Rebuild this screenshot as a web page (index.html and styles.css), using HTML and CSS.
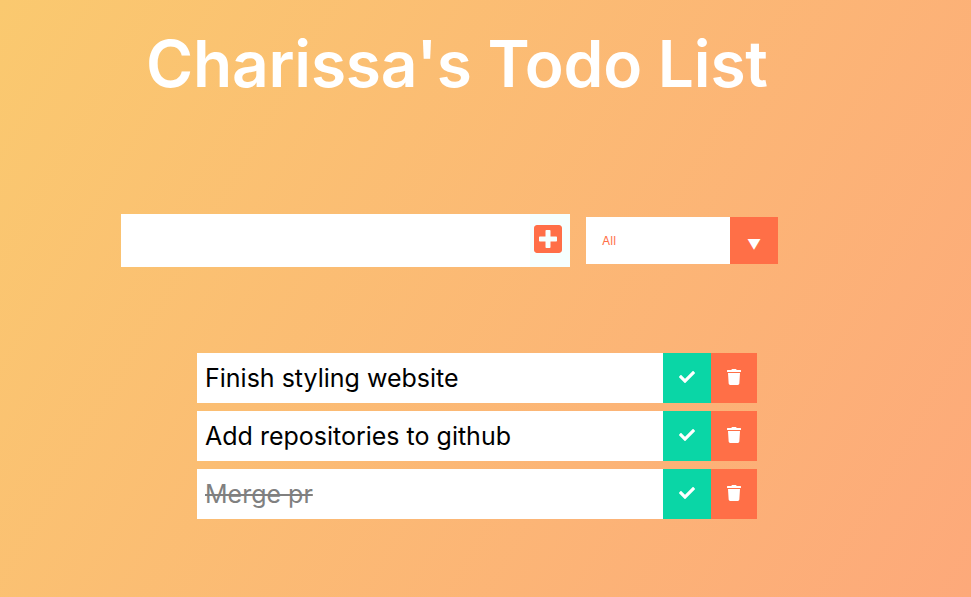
FILE: index.html
```html
<!DOCTYPE html>
<html>
    <head>
        <link rel="stylesheet" href="styles.css">
    </head>
    <body>
        <header class="title-bar">
            <h1>Charissa's Todo List</h1>
        </header>
        <form class="todo-form">
            <div class="todo-input-box">
                <input type="text" class="todo-input">
                <button type="button" class="add-btn">
                    <svg width="28" height="32" viewBox="0 0 448 512"><path fill="#ff6f47" d="M400 32H48C21.500 32 0 53.500 0 80v352c0 26.500 21.500 48 48 48h352c26.500 0 48-21.500 48-48V80c0-26.500-21.500-48-48-48zm-32 252c0 6.600-5.400 12-12 12h-92v92c0 6.600-5.400 12-12 12h-56c-6.600 0-12-5.400-12-12v-92H92c-6.600 0-12-5.400-12-12v-56c0-6.600 5.400-12 12-12h92v-92c0-6.600 5.400-12 12-12h56c6.600 0 12 5.400 12 12v92h92c6.600 0 12 5.400 12 12v56z"/></svg>
                </button>
            </div>
            <div class="filter">
                <span class="filter-value">All</span>
                <span class="filter-arrow">&#9660;</span>
            </div>
        </form>
        <ul class="todo-list">
            <li class="todo">
                <span class="todo-text">Finish styling website</span>
                <button class="check-btn">
                    <svg width="16" height="16" viewBox="0 0 512 512"><path fill="#fff" d="M173.900 439.400l-166.400-166.400c-10-10-10-26.200 0-36.200l36.200-36.200c10-10 26.200-10 36.200 0L192 312.700 432.100 72.600c10-10 26.200-10 36.200 0l36.200 36.200c10 10 10 26.200 0 36.200l-294.400 294.400c-10 10-26.200 10-36.200 0z"/></svg>
                </button>
                <button class="trash-btn">
                    <svg width="14" height="16" viewBox="0 0 448 512"><path fill="#fff" d="M432 32H312l-9.400-18.700A24 24 0 0 0 281.100 0H166.800a23.720 23.720 0 0 0-21.400 13.300L136 32H16A16 16 0 0 0 0 48v32a16 16 0 0 0 16 16h416a16 16 0 0 0 16-16V48a16 16 0 0 0-16-16zM53.200 467a48 48 0 0 0 47.900 45h245.800a48 48 0 0 0 47.900-45L416 128H32z"/></svg>
                </button>
            </li>
            <li class="todo">
                <span class="todo-text">Add repositories to github</span>
                <button class="check-btn">
                    <svg width="16" height="16" viewBox="0 0 512 512"><path fill="#fff" d="M173.900 439.400l-166.400-166.400c-10-10-10-26.200 0-36.200l36.200-36.200c10-10 26.200-10 36.200 0L192 312.700 432.100 72.600c10-10 26.200-10 36.200 0l36.200 36.200c10 10 10 26.200 0 36.200l-294.400 294.400c-10 10-26.200 10-36.200 0z"/></svg>
                </button>
                <button class="trash-btn">
                    <svg width="14" height="16" viewBox="0 0 448 512"><path fill="#fff" d="M432 32H312l-9.400-18.700A24 24 0 0 0 281.100 0H166.800a23.720 23.720 0 0 0-21.400 13.300L136 32H16A16 16 0 0 0 0 48v32a16 16 0 0 0 16 16h416a16 16 0 0 0 16-16V48a16 16 0 0 0-16-16zM53.200 467a48 48 0 0 0 47.900 45h245.800a48 48 0 0 0 47.900-45L416 128H32z"/></svg>
                </button>
            </li>
            <li class="todo completed">
                <span class="todo-text">Merge pr</span>
                <button class="check-btn">
                    <svg width="16" height="16" viewBox="0 0 512 512"><path fill="#fff" d="M173.900 439.400l-166.400-166.400c-10-10-10-26.200 0-36.200l36.200-36.200c10-10 26.200-10 36.200 0L192 312.700 432.100 72.600c10-10 26.200-10 36.200 0l36.200 36.200c10 10 10 26.200 0 36.200l-294.400 294.400c-10 10-26.200 10-36.200 0z"/></svg>
                </button>
                <button class="trash-btn">
                    <svg width="14" height="16" viewBox="0 0 448 512"><path fill="#fff" d="M432 32H312l-9.400-18.700A24 24 0 0 0 281.100 0H166.800a23.720 23.720 0 0 0-21.400 13.300L136 32H16A16 16 0 0 0 0 48v32a16 16 0 0 0 16 16h416a16 16 0 0 0 16-16V48a16 16 0 0 0-16-16zM53.200 467a48 48 0 0 0 47.900 45h245.800a48 48 0 0 0 47.900-45L416 128H32z"/></svg>
                </button>
            </li>
        </ul>
    </body>
</html>
```

FILE: styles.css
```css
* {
    margin: 0;
    padding: 0;
    box-sizing: border-box;
}
html, body {
    height: 100%;
}
body {
    background-image: linear-gradient(120deg, #fac96f, #fda97a);
    font-family: "Inter", "Open Sans", sans-serif;
    overflow: hidden;
}
.title-bar {
    padding: 22px 0 0 146px;
    height: 214px;
}
h1 {
    color: white;
    font-size: 64px;
    font-weight: 600;
    letter-spacing: -0.2px;
    line-height: 84px;
    white-space: nowrap;
}
.todo-form {
    display: flex;
    align-items: center;
    gap: 16px;
    padding-left: 121px;
}
.todo-input-box {
    display: flex;
    align-items: center;
    width: 449px;
    height: 53px;
    background-color: #f6fffe;
    padding-right: 8px;
}
.todo-input {
    flex: 1;
    height: 100%;
    border: none;
    outline: none;
    background-color: white;
}
.add-btn {
    display: flex;
    border: none;
    background: none;
    margin: 0 0 3px 4px;
}
.filter {
    display: flex;
    width: 192px;
    height: 47px;
    background-color: white;
}
.filter-value {
    flex: 1;
    padding-left: 16px;
    color: #ff6f47;
    font-size: 12px;
    line-height: 47px;
}
.filter-arrow {
    width: 48px;
    padding-top: 8px;
    background-color: #ff6f47;
    color: white;
    font-size: 14px;
    line-height: 39px;
    text-align: center;
}
.todo-list {
    display: flex;
    flex-direction: column;
    gap: 8px;
    list-style: none;
    margin: 86px 0 0 197px;
    width: 560px;
}
.todo {
    display: flex;
    height: 50px;
    background-color: white;
}
.todo-text {
    flex: 1;
    padding-left: 8px;
    color: black;
    font-size: 25px;
    line-height: 50px;
}
.completed .todo-text {
    color: gray;
    text-decoration: line-through;
}
.check-btn, .trash-btn {
    display: flex;
    align-items: center;
    justify-content: center;
    height: 50px;
    padding-bottom: 2px;
    border: none;
}
.check-btn {
    width: 48px;
    background-color: #0ad6a6;
}
.trash-btn {
    width: 46px;
    background-color: #ff6f47;
}
```
